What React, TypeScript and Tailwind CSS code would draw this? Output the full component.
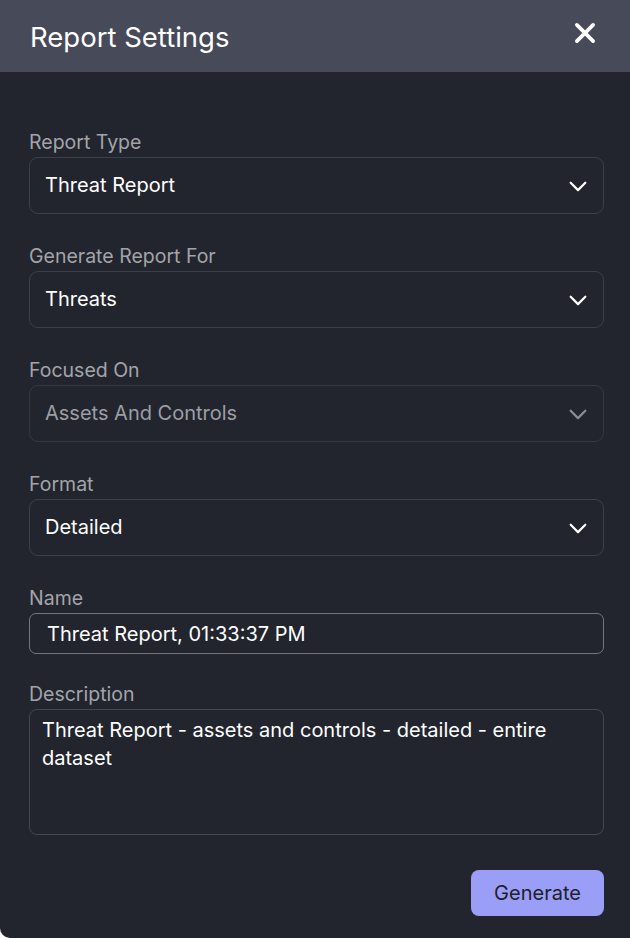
import React from "react";

function Chevron({ muted }: { muted?: boolean }) {
  return (
    <svg
      width="22"
      height="22"
      viewBox="0 0 24 24"
      fill="none"
      stroke={muted ? "#8b8d94" : "#ffffff"}
      strokeWidth="2.4"
      strokeLinecap="round"
      strokeLinejoin="round"
    >
      <path d="M4 8.5l8 8 8-8" />
    </svg>
  );
}

interface SelectFieldProps {
  label: string;
  value: string;
  disabled?: boolean;
}

function SelectField({ label, value, disabled }: SelectFieldProps) {
  return (
    <div className="flex flex-col">
      <label className="text-[19.5px] leading-[26px] text-[#a3a4aa]">{label}</label>
      <div
        className={
          "mt-[2px] flex h-[57px] items-center justify-between rounded-[9px] border pl-[15px] pr-[14px] " +
          (disabled ? "border-[#353844] text-[#9c9ea4]" : "border-[#3d404b] text-white")
        }
      >
        <span className="-mt-[2px] text-[20px]">{value}</span>
        <Chevron muted={disabled} />
      </div>
    </div>
  );
}

export default function App() {
  return (
    <div
      className="flex min-h-[938px] w-[630px] flex-col overflow-hidden rounded-bl-[10px] bg-[#22252e]"
      style={{ fontFamily: "Inter, 'Noto Sans', sans-serif" }}
    >
      <header className="flex h-[72px] items-center justify-between bg-[#474a59] pl-[30px] pr-[32px]">
        <h1 className="mt-[4px] text-[27.5px] font-normal text-white">Report Settings</h1>
        <button className="mb-[6px] text-white">
          <svg width="26" height="26" viewBox="0 0 24 24" fill="none" stroke="#ffffff" strokeWidth="3.4" strokeLinecap="round">
            <path d="M4.5 4.5l15 15M19.5 4.5l-15 15" />
          </svg>
        </button>
      </header>

      <main className="flex flex-1 flex-col gap-[29px] pl-[29px] pr-[26px] pt-[57px]">
        <SelectField label="Report Type" value="Threat Report" />
        <SelectField label="Generate Report For" value="Threats" />
        <SelectField label="Focused On" value="Assets And Controls" disabled />
        <SelectField label="Format" value="Detailed" />

        <div className="flex flex-col">
          <label className="text-[19.5px] leading-[26px] text-[#a3a4aa]">Name</label>
          <div className="mt-[2px] flex h-[41px] items-center rounded-[7px] border border-[#75767d] pl-[17px]">
            <span className="text-[20px] text-white">Threat Report, 01:33:37 PM</span>
          </div>
        </div>

        <div className="-mt-[2px] flex flex-col">
          <label className="text-[19.5px] leading-[26px] text-[#a3a4aa]">Description</label>
          <div className="mt-[2px] h-[126px] rounded-[8px] border border-[#44474f] px-[12px] pt-[6px]">
            <p className="text-[20px] leading-[28px] text-white">
              Threat Report - assets and controls - detailed - entire dataset
            </p>
          </div>
        </div>

        <div className="mt-[6px] flex justify-end">
          <button className="h-[46px] w-[133px] rounded-[8px] bg-[#9a9ef6] text-[20px] text-[#1e1f2a]">
            Generate
          </button>
        </div>
      </main>
    </div>
  );
}
